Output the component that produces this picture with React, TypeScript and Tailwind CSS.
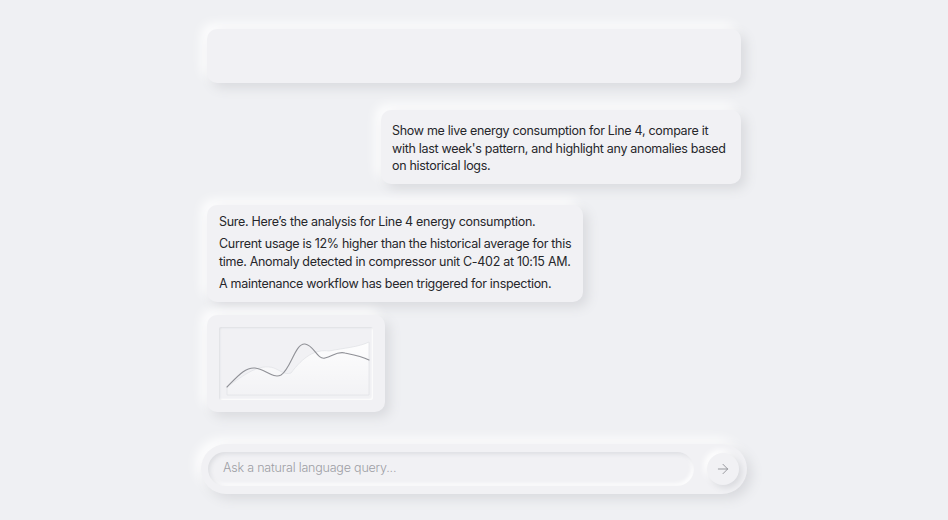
import React from 'react';
import { ArrowRight } from 'lucide-react';

const raised = 'bg-[#f1f1f4] shadow-[5px_5px_12px_#d9dade,-5px_-5px_12px_#ffffff]';

function ChartCard() {
  return (
    <div className={`w-[178px] h-[97px] rounded-[10px] p-[12px] ${raised}`}>
      <div className="w-full h-full rounded-[2px] shadow-[inset_1px_1px_2px_#dedfe3,inset_-1px_-1px_2px_#ffffff]">
        <svg viewBox="0 0 154 73" className="w-full h-full">
          <defs>
            <linearGradient id="area" x1="0" y1="0" x2="0" y2="1">
              <stop offset="0" stopColor="#ffffff" stopOpacity="0.9" />
              <stop offset="1" stopColor="#ffffff" stopOpacity="0.1" />
            </linearGradient>
          </defs>
          <path
            d="M8 60 C 25 48, 40 36, 55 41 C 62 44, 66 48, 72 46 C 84 30, 96 22, 110 24 C 125 21, 140 20, 150 15 L 150 68 L 8 68 Z"
            fill="url(#area)"
            stroke="#e2e3e7"
            strokeWidth="0.8"
          />
          <path
            d="M8 60 C 18 50, 26 40, 36 41 C 46 42, 54 52, 62 48 C 72 42, 76 16, 86 17 C 95 18, 98 33, 106 31 C 114 29, 118 24, 126 26 C 136 28, 142 29, 150 33"
            fill="none"
            stroke="#8f9096"
            strokeWidth="1.1"
            strokeLinecap="round"
          />
        </svg>
      </div>
    </div>
  );
}

export default function App() {
  return (
    <div
      className="w-[948px] h-[520px] bg-[#eff0f3] overflow-hidden"
      style={{ fontFamily: 'Inter, "Liberation Sans", sans-serif' }}
    >
      <div className="w-[534px] mx-auto pt-[29px] flex flex-col">
        <div className={`h-[54px] rounded-[10px] ${raised}`} />

        <div className={`self-end mt-[27px] w-[360px] rounded-[10px] px-[11px] pt-[12px] pb-[9px] text-[12.5px] tracking-[-0.3px] leading-[17.5px] text-[#26272b] ${raised}`}>
          Show me live energy consumption for Line 4, compare it with last week's pattern, and highlight any anomalies based on historical logs.
        </div>

        <div className={`self-start mt-[21px] w-[376px] rounded-[10px] pl-[12px] pr-[4px] pt-[8px] pb-[9px] text-[12.5px] tracking-[-0.3px] leading-[18px] text-[#26272b] flex flex-col gap-[4px] ${raised}`}>
          <p>Sure. Here’s the analysis for Line 4 energy consumption.</p>
          <p>Current usage is 12% higher than the historical average for this time. Anomaly detected in compressor unit C-402 at 10:15 AM.</p>
          <p>A maintenance workflow has been triggered for inspection.</p>
        </div>

        <div className="mt-[13px]">
          <ChartCard />
        </div>

        <div className={`-mx-[6px] mt-[32px] h-[50px] rounded-full flex items-center pl-[7px] pr-[8px] gap-[13px] ${raised}`}>
          <div className="flex-1 h-[34px] rounded-full flex items-center px-[15px] text-[12.5px] tracking-[-0.2px] text-[#9d9ea4] font-light shadow-[inset_2px_2px_4px_#dcdde1,inset_-2px_-2px_4px_#ffffff]">
            Ask a natural language query...
          </div>
          <button className="w-[32px] h-[32px] rounded-full bg-[#f1f1f4] flex items-center justify-center shadow-[3px_3px_6px_#d9dade,-3px_-3px_6px_#ffffff]">
            <ArrowRight className="w-[16px] h-[16px] text-[#8a8b91]" strokeWidth={1.3} />
          </button>
        </div>
      </div>
    </div>
  );
}
